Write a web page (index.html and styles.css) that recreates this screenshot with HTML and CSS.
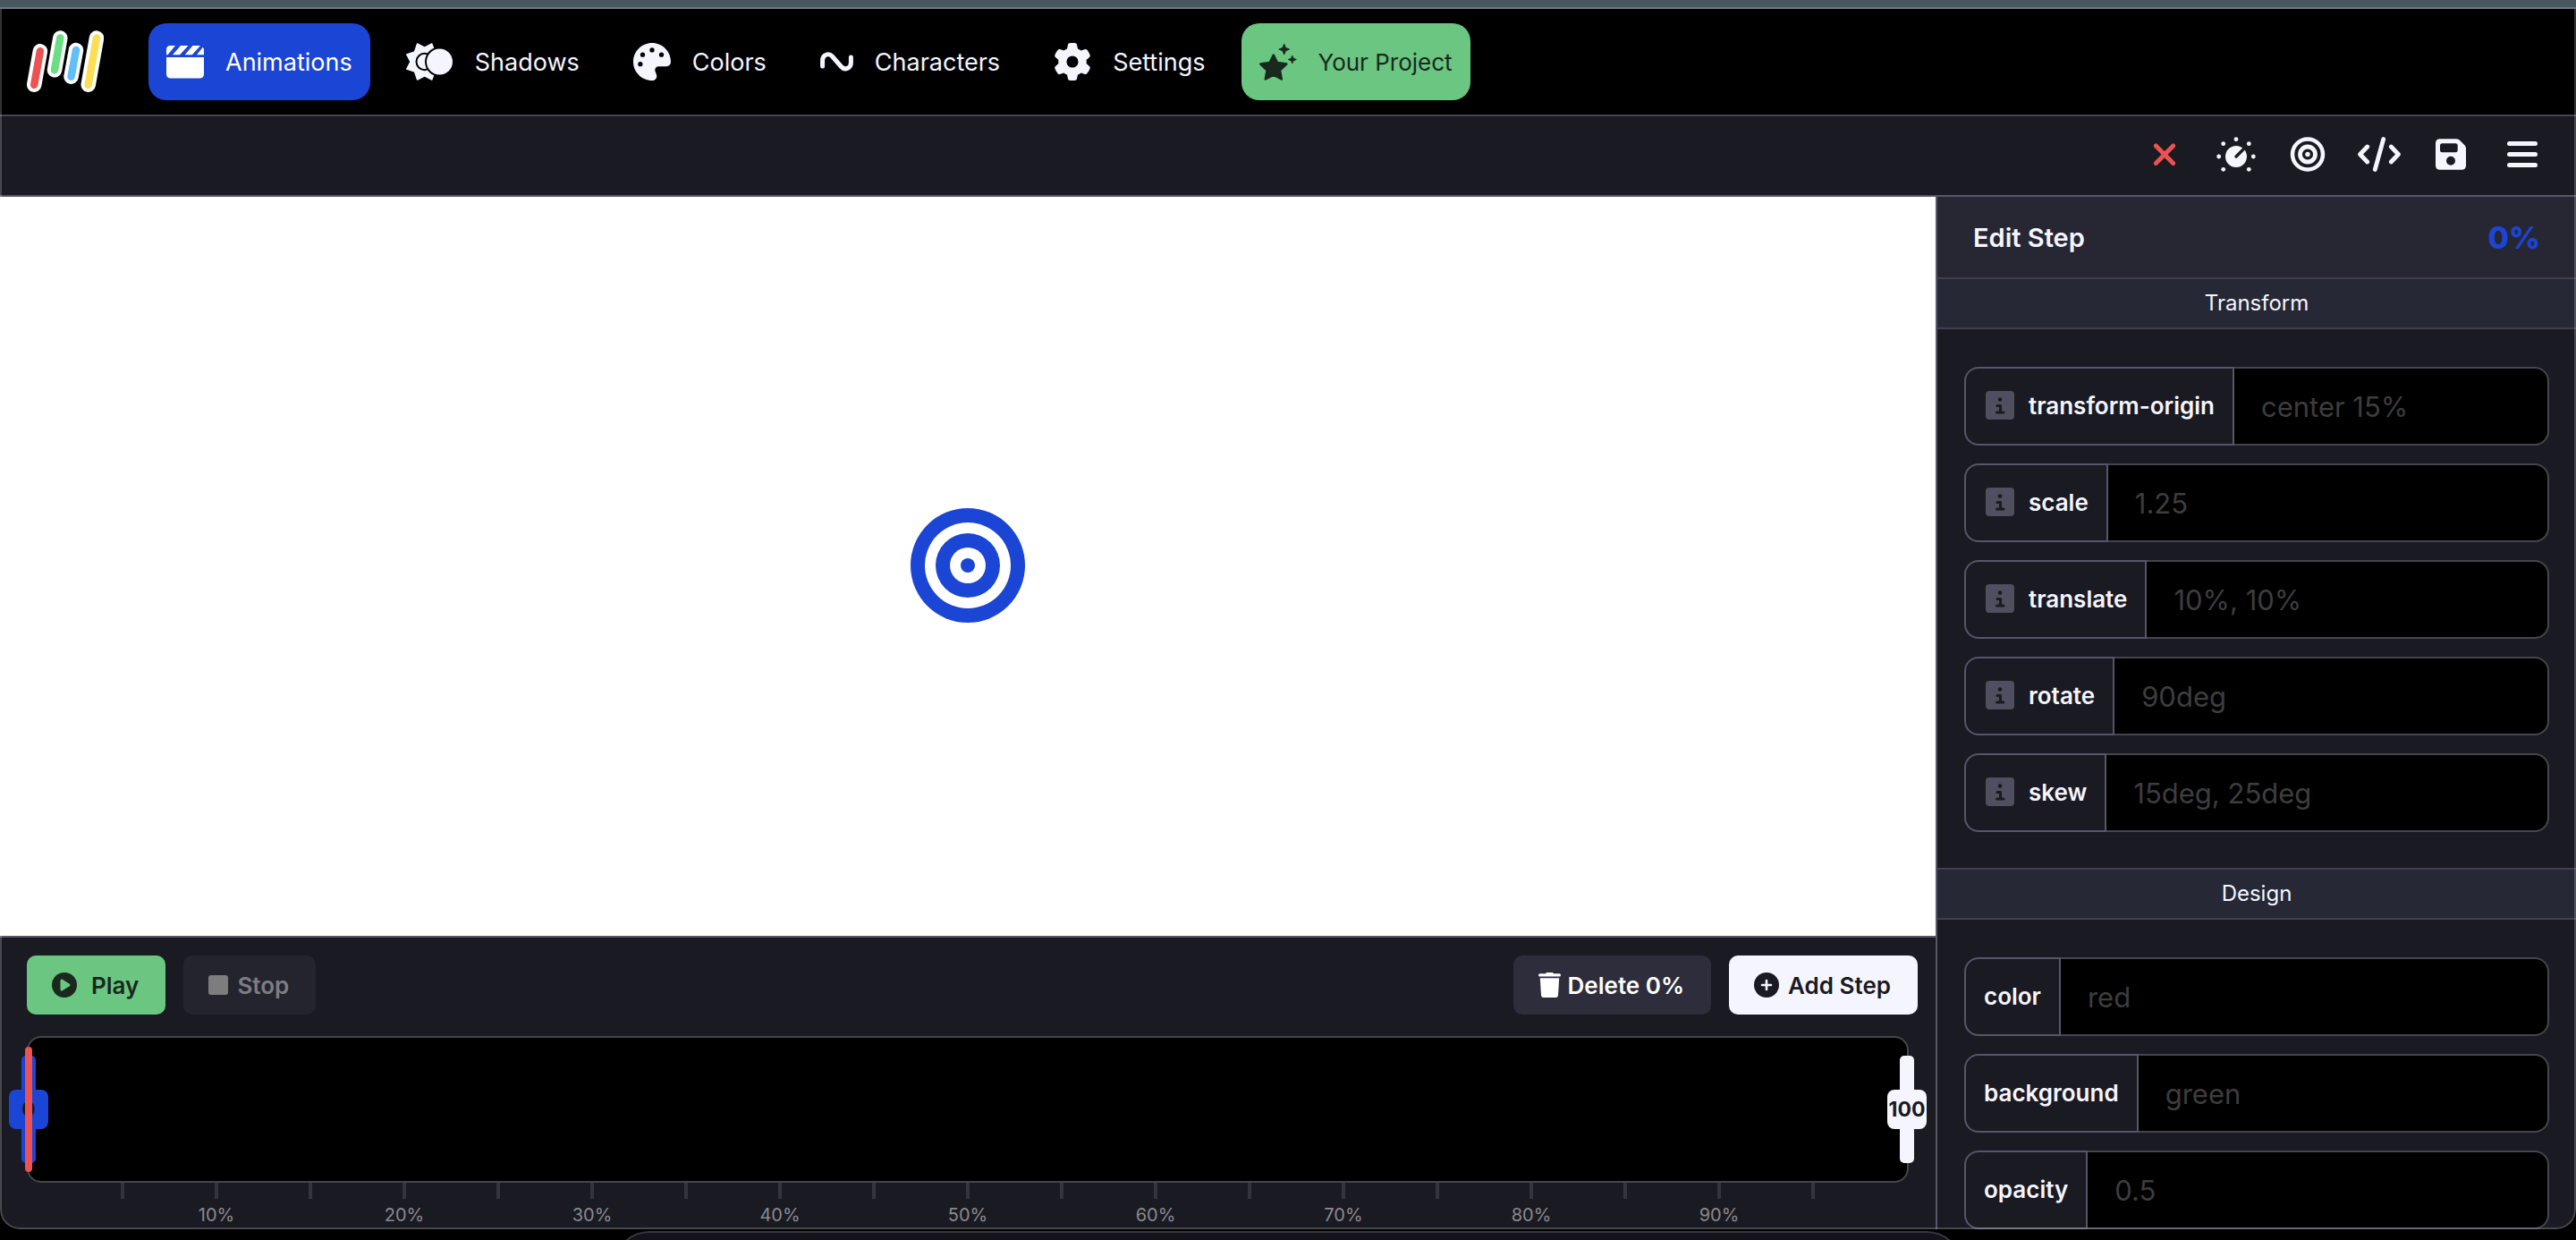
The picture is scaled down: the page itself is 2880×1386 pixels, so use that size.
FILE: index.html
```html
<!DOCTYPE html>
<html lang="en">
<head>
<meta charset="utf-8">
<title>Animations</title>
<link rel="stylesheet" href="styles.css">
</head>
<body>
<svg class="defs" aria-hidden="true">
  <symbol id="info" viewBox="0 0 32 32">
    <rect width="32" height="32" rx="4" fill="#4f4f60"/>
    <circle cx="16" cy="9.500" r="2.300" fill="#1a1a22"/>
    <path d="M13 16.500h3.500v7.500M12.500 24h7.500" fill="none" stroke="#1a1a22" stroke-width="3" stroke-linecap="round" stroke-linejoin="round"/>
  </symbol>
</svg>
<div class="backdrop"></div>
<div class="window">
  <header class="nav">
    <a class="logo" href="#" aria-label="Home">
      <svg width="86" height="70" viewBox="0 0 86 70" stroke-linecap="round">
        <g stroke="#fff" stroke-width="16.500"><path d="M14.900 23.300L8.200 60.700M37.300 8.500L31 44.300M55 22L49.500 51.700M78 8.500L68.700 60.700"/></g>
        <g stroke-width="8.500"><path stroke="#ed5252" d="M14.900 23.300L8.200 60.700"/><path stroke="#6ade82" d="M37.300 8.500L31 44.300"/><path stroke="#60bffb" d="M55 22L49.500 51.700"/><path stroke="#fbde55" d="M78 8.500L68.700 60.700"/></g>
      </svg>
    </a>
    <nav class="tabs">
      <a class="tab tab-active" href="#">
        <svg width="42" height="42" viewBox="0 0 42 42" fill="currentColor"><path d="M0 13.300V7.500Q0 3 4.500 3H10L1.500 13.300zM7 13.300L16 3h8.500L15 13.300zM20.700 13.300L29.500 3H37l.8.200L28.800 13.300zM34 13.300l6.800-8.500Q42 6 42 8v5.300zM0 16h42v18.500q0 5-5 5H5q-5 0-5-5z"/></svg>
        <span>Animations</span>
      </a>
      <a class="tab" href="#">
        <svg width="53" height="42" viewBox="0 0 53 42">
          <mask id="ecl"><rect width="53" height="42" fill="#fff"/><circle cx="37.500" cy="21" r="16.500"/><circle cx="20.700" cy="21" r="9.200" fill="none" stroke="#000" stroke-width="2"/></mask>
          <path mask="url(#ecl)" fill="currentColor" stroke="currentColor" stroke-linejoin="round" stroke-width="1.500" d="M5 21L.8 12.900l8.800-3L12.600 1l8.100 4.200L28.800 1 32 10v22l-3.200 9-8.100-4.200L12.600 41l-3-8.900-8.800-3z"/>
          <circle cx="37.500" cy="21" r="14.500" fill="currentColor"/>
        </svg>
        <span>Shadows</span>
      </a>
      <a class="tab" href="#">
        <svg width="42" height="42" viewBox="0 0 512 512" fill="currentColor"><path d="M512 256c0 .9 0 1.800 0 2.700c-.4 36.500-33.600 61.300-70.100 61.300H344c-26.500 0-48 21.500-48 48c0 3.400 .4 6.700 1 9.900c2.100 10.200 6.500 20 10.800 29.900c6.100 13.800 12.100 27.500 12.100 42c0 31.800-21.600 60.700-53.400 62c-3.500 .1-7 .2-10.600 .2C114.600 512 0 397.400 0 256S114.600 0 256 0S512 114.600 512 256zM128 288a32 32 0 1 0 -64 0 32 32 0 1 0 64 0zm0-96a32 32 0 1 0 0-64 32 32 0 1 0 0 64zM288 96a32 32 0 1 0 -64 0 32 32 0 1 0 64 0zm96 96a32 32 0 1 0 0-64 32 32 0 1 0 0 64z"/></svg>
        <span>Colors</span>
      </a>
      <a class="tab" href="#">
        <svg width="37" height="42" viewBox="0 0 37 42" fill="none" stroke="currentColor" stroke-width="5" stroke-linecap="round"><path d="M2.600 26V19.500C2.600 13 9.500 10.800 13.500 15L23.500 26.500C27.500 31 34.400 28.500 34.400 22V16"/></svg>
        <span>Characters</span>
      </a>
      <a class="tab" href="#">
        <svg width="42" height="42" viewBox="0 0 512 512" fill="currentColor"><path d="M495.900 166.600c3.200 8.700 .5 18.400-6.400 24.600l-43.300 39.400c1.100 8.300 1.700 16.800 1.700 25.400s-.6 17.100-1.700 25.400l43.300 39.400c6.900 6.200 9.600 15.900 6.400 24.600c-4.400 11.900-9.700 23.300-15.800 34.300l-4.700 8.100c-6.600 11-14 21.400-22.100 31.200c-5.900 7.200-15.700 9.600-24.500 6.800l-55.700-17.700c-13.400 10.300-28.200 18.900-44 25.400l-12.500 57.100c-2 9.100-9 16.300-18.200 17.800c-13.800 2.300-28 3.500-42.500 3.500s-28.700-1.200-42.500-3.500c-9.200-1.500-16.200-8.700-18.200-17.800l-12.500-57.100c-15.800-6.500-30.600-15.100-44-25.400L83.100 425.900c-8.800 2.800-18.600 .3-24.500-6.800c-8.100-9.800-15.500-20.200-22.100-31.200l-4.700-8.100c-6.100-11-11.400-22.400-15.800-34.300c-3.200-8.700-.5-18.400 6.400-24.600l43.300-39.400C64.600 273.100 64 264.600 64 256s.6-17.100 1.700-25.400L22.400 191.200c-6.900-6.200-9.600-15.900-6.400-24.600c4.400-11.900 9.700-23.300 15.800-34.300l4.700-8.100c6.600-11 14-21.400 22.100-31.200c5.900-7.200 15.700-9.600 24.500-6.800l55.700 17.700c13.400-10.300 28.200-18.900 44-25.400l12.500-57.100c2-9.100 9-16.300 18.200-17.800C227.300 1.200 241.500 0 256 0s28.700 1.200 42.500 3.500c9.200 1.500 16.200 8.700 18.200 17.800l12.500 57.100c15.800 6.500 30.600 15.100 44 25.400l55.700-17.700c8.800-2.800 18.600-.3 24.500 6.800c8.100 9.800 15.500 20.200 22.100 31.200l4.700 8.100c6.100 11 11.400 22.400 15.800 34.300zM256 336a80 80 0 1 0 0-160 80 80 0 1 0 0 160z"/></svg>
        <span>Settings</span>
      </a>
      <a class="tab tab-project" href="#">
        <svg width="42" height="42" viewBox="0 0 42 42" fill="currentColor" stroke="currentColor" stroke-linejoin="round"><path stroke-width="2.500" d="M15.800 13.500l4.200 8.600 10.300 1.500-7.300 6.900 1.800 10-9-4.800-9 4.800 1.800-10-7.300-6.900 10.300-1.500z"/><path stroke-width="1" d="M27.700 1.200l1.700 4.200 4.100 1.700-4.100 1.700-1.700 4.200-1.700-4.200-4.100-1.700 4.100-1.700zM36.800 14.200l1.300 3 3.200 1.300-3.200 1.300-1.300 3-1.300-3-3.200-1.300 3.200-1.300z"/></svg>
        <span>Your Project</span>
      </a>
    </nav>
  </header>

  <div class="toolbar">
    <button class="tool tool-close" aria-label="Close"><svg width="48" height="40" viewBox="0 0 48 40"><path d="M14.300 10L33.700 29.400M33.700 10L14.300 29.400" stroke="currentColor" stroke-width="5" stroke-linecap="round"/></svg></button>
    <button class="tool" aria-label="Speed"><svg width="48" height="40" viewBox="0 0 48 40" fill="currentColor"><circle cx="24" cy="22" r="12"/><path d="M24 22L35 11" stroke="#1a1a22" stroke-width="3.400" stroke-linecap="round"/><circle cx="24" cy="2.700" r="2.400"/><circle cx="9.700" cy="7.700" r="2.400"/><circle cx="38.300" cy="7.700" r="2.400"/><circle cx="4.700" cy="22" r="2.400"/><circle cx="43.300" cy="22" r="2.400"/><circle cx="9.700" cy="36.300" r="2.400"/><circle cx="38.300" cy="36.300" r="2.400"/></svg></button>
    <button class="tool" aria-label="Target"><svg width="48" height="40" viewBox="0 0 48 40" fill="none" stroke="currentColor"><circle cx="24" cy="19.500" r="17" stroke-width="4.500"/><circle cx="24" cy="19.500" r="8.500" stroke-width="4.800"/><circle cx="24" cy="19.500" r="2.700" fill="currentColor" stroke="none"/></svg></button>
    <button class="tool" aria-label="Code"><svg width="48" height="40" viewBox="0 0 48 40" fill="none" stroke="currentColor" stroke-width="4.800" stroke-linecap="round" stroke-linejoin="round"><path d="M10.700 11L2.600 19.500 10.700 28M37.300 11L45.400 19.500 37.300 28M28.700 2.500L19.300 36.500"/></svg></button>
    <button class="tool" aria-label="Save"><svg width="48" height="40" viewBox="0 0 48 40"><path fill="currentColor" fill-rule="evenodd" d="M12 2.300H30.500q2 0 3.500 1.500L39.500 9.300q1.500 1.500 1.500 3.500V31.700q0 5-5 5H12q-5 0-5-5V7.300q0-5 5-5zM14.500 7.300q-2.500 0-2.500 2.500v5q0 2.500 2.500 2.500h14.700q2.500 0 2.500-2.500v-5q0-2.500-2.500-2.500zM24 21.700a5 5 0 1 0 0 10 5 5 0 1 0 0-10z"/></svg></button>
    <button class="tool" aria-label="Menu"><svg width="48" height="40" viewBox="0 0 48 40"><path d="M9.500 7.500h29M9.500 19.500h29M9.500 31.500h29" stroke="currentColor" stroke-width="5" stroke-linecap="round"/></svg></button>
  </div>

  <div class="workspace">
    <main class="stage">
      <div class="canvas">
        <svg width="128" height="128" viewBox="0 0 128 128"><g fill="#1b45d4"><circle cx="64" cy="64" r="64"/><circle cx="64" cy="64" r="48" fill="#fff"/><circle cx="64" cy="64" r="36"/><circle cx="64" cy="64" r="20" fill="#fff"/><circle cx="64" cy="64" r="8"/></g></svg>
      </div>
      <section class="timeline">
        <div class="controls">
          <button class="btn btn-play"><svg width="28" height="28" viewBox="0 0 28 28"><circle cx="14" cy="14" r="14" fill="currentColor"/><path d="M11 9v10l8-5z" fill="#6ac681" stroke="#6ac681" stroke-width="3" stroke-linejoin="round"/></svg>Play</button>
          <button class="btn btn-stop" disabled><svg width="22" height="22" viewBox="0 0 22 22"><rect width="22" height="22" rx="3" fill="currentColor"/></svg>Stop</button>
          <span class="spacer"></span>
          <button class="btn btn-delete"><svg width="25" height="28" viewBox="0 0 25 28" fill="currentColor"><path d="M8 1.200L9 0h7l1 1.200h6.500q1.500 0 1.500 1.700T23.500 4.600h-22Q0 4.600 0 2.900T1.500 1.200zM1.800 6.300h21.400L22 25.500Q21.800 28 19.300 28H5.700Q3.200 28 3 25.500z"/></svg>Delete 0%</button>
          <button class="btn btn-add"><svg width="28" height="28" viewBox="0 0 28 28"><circle cx="14" cy="14" r="14" fill="currentColor"/><path d="M14 9v10M9 14h10" stroke="#f5f5ff" stroke-width="2.600" stroke-linecap="round"/></svg>Add Step</button>
        </div>
        <div class="track">
          <button class="handle handle-current"><span>0</span></button>
          <button class="handle handle-end"><span>100</span></button>
          <div class="playhead"></div>
        </div>
        <div class="ruler">
          <div class="tick"></div><div class="tick">10%</div><div class="tick"></div><div class="tick">20%</div><div class="tick"></div><div class="tick">30%</div><div class="tick"></div><div class="tick">40%</div><div class="tick"></div><div class="tick">50%</div><div class="tick"></div><div class="tick">60%</div><div class="tick"></div><div class="tick">70%</div><div class="tick"></div><div class="tick">80%</div><div class="tick"></div><div class="tick">90%</div><div class="tick"></div>
        </div>
      </section>
    </main>

    <aside class="sidebar">
      <div class="side-head"><h1>Edit Step</h1><strong>0%</strong></div>
      <h2 class="group-title">Transform</h2>
      <div class="fields">
        <div class="field"><label for="origin"><svg width="32" height="32"><use href="#info"/></svg>transform-origin</label><input id="origin" type="text" placeholder="center 15%"></div>
        <div class="field"><label for="scale"><svg width="32" height="32"><use href="#info"/></svg>scale</label><input id="scale" type="text" placeholder="1.25"></div>
        <div class="field"><label for="translate"><svg width="32" height="32"><use href="#info"/></svg>translate</label><input id="translate" type="text" placeholder="10%, 10%"></div>
        <div class="field"><label for="rotate"><svg width="32" height="32"><use href="#info"/></svg>rotate</label><input id="rotate" type="text" placeholder="90deg"></div>
        <div class="field"><label for="skew"><svg width="32" height="32"><use href="#info"/></svg>skew</label><input id="skew" type="text" placeholder="15deg, 25deg"></div>
      </div>
      <h2 class="group-title">Design</h2>
      <div class="fields">
        <div class="field"><label for="color">color</label><input id="color" type="text" placeholder="red"></div>
        <div class="field"><label for="background">background</label><input id="background" type="text" placeholder="green"></div>
        <div class="field"><label for="opacity">opacity</label><input id="opacity" type="text" placeholder="0.5"></div>
      </div>
    </aside>
  </div>
</div>
<div class="shelf"><div class="dock"></div></div>
</body>
</html>
```
FILE: styles.css
```css
* { box-sizing: border-box; }

body {
  margin: 0;
  height: 100vh;
  overflow: hidden;
  display: flex;
  flex-direction: column;
  background: #000;
  color: #f5f5ff;
  font-family: Inter, "Liberation Sans", sans-serif;
}

button, input { font-family: inherit; margin: 0; }
button { border: 0; cursor: pointer; }
svg { display: block; flex: none; }
.defs { position: absolute; width: 0; height: 0; }

.backdrop {
  flex: none;
  height: 10px;
  background: #485760;
  border-bottom: 2px solid #6c7980;
}

.window {
  position: relative;
  flex: 1;
  min-height: 0;
  display: flex;
  flex-direction: column;
  overflow: hidden;
  border-radius: 0 0 22px 22px;
  background: #1a1a22;
}
.window::after {
  content: "";
  position: absolute;
  inset: 0;
  border: 2px solid rgba(255, 255, 255, 0.2);
  border-top: 0;
  border-radius: 0 0 22px 22px;
  pointer-events: none;
}

.nav {
  flex: none;
  display: flex;
  align-items: center;
  gap: 50px;
  padding: 16px 30px;
  background: #000;
  border-bottom: 2px solid #45454f;
}
.tabs { display: flex; gap: 20px; }
.tab {
  display: flex;
  align-items: center;
  gap: 24px;
  height: 86px;
  padding: 0 20px;
  border-radius: 20px;
  color: #f5f5ff;
  font-size: 27px;
  text-decoration: none;
}
.tab-active { background: #1b45d4; color: #fff; }
.tab-project { background: #6ac681; color: #1a281e; font-size: 26px; }

.toolbar {
  flex: none;
  display: flex;
  justify-content: flex-end;
  height: 90px;
  padding: 0 20px 2px 0;
  border-bottom: 2px solid #56566a;
}
.tool {
  display: grid;
  place-items: center;
  width: 80px;
  padding: 0;
  background: none;
  color: #f5f5ff;
}
.tool-close { color: #ed5252; }

.workspace { flex: 1; min-height: 0; display: flex; }
.stage { flex: 1; min-width: 0; display: flex; flex-direction: column; }
.canvas { flex: 1; display: grid; place-items: center; padding-bottom: 2px; background: #fff; }

.timeline {
  border-top: 2px solid #56566a;
  padding: 20px 20px 4px 30px;
}
.controls { display: flex; gap: 20px; margin-bottom: 24px; }
.spacer { flex: 1; }
.btn {
  display: flex;
  align-items: center;
  gap: 10px;
  height: 66px;
  padding: 0 30px 0 28px;
  border-radius: 10px;
  font-size: 26px;
  font-weight: 600;
}
.btn-play { background: #6ac681; color: #1a281e; gap: 16px; }
.btn-stop { background: #24242f; color: #7d7d80; }
.btn-delete { background: #2d2d3b; color: #fff; gap: 8px; }
.btn-add { background: #f5f5ff; color: #1a1a22; }

.track {
  position: relative;
  height: 164px;
  margin-right: 10px;
  border: 2px solid #45454f;
  border-radius: 16px;
  background: #000;
}
.handle {
  position: absolute;
  top: 20px;
  display: flex;
  align-items: center;
  justify-content: center;
  width: 16px;
  height: 120px;
  padding: 0;
  margin-left: -8px;
  border-radius: 5px;
  color: #1a1a22;
  font-size: 23px;
  font-weight: 700;
}
.handle span {
  flex: none;
  width: 44px;
  line-height: 44px;
  border-radius: 8px;
  background: inherit;
  text-align: center;
}
.handle-current { left: 0; background: #1b45d4; }
.handle-end { left: 100%; background: #f5f5ff; }
.playhead {
  position: absolute;
  left: 0;
  top: 10px;
  width: 8px;
  height: 140px;
  margin-left: -4px;
  border-radius: 4px;
  background: #ed5252;
}

.ruler {
  display: flex;
  justify-content: center;
  height: 48px;
  margin: 0 12px 0 2px;
}
.tick {
  flex: 0 0 5%;
  display: flex;
  flex-direction: column;
  align-items: center;
  gap: 6px;
  color: #8a8a8e;
  font-size: 20px;
  line-height: 24px;
}
.tick::before {
  content: "";
  width: 4px;
  height: 18px;
  background: #34343f;
}

.sidebar {
  flex: 0 0 716px;
  overflow: hidden;
  border-left: 2px solid #56566a;
}
.side-head {
  display: flex;
  align-items: center;
  justify-content: space-between;
  height: 90px;
  padding: 0 40px;
  background: #272733;
}
.side-head h1 { margin: 0; font-size: 29px; font-weight: 600; }
.side-head strong { color: #1b45d4; font-size: 34px; font-weight: 800; }
.group-title {
  margin: 0;
  height: 58px;
  border: solid #3f3f50;
  border-width: 2px 0;
  background: #262835;
  font-size: 24px;
  font-weight: 400;
  line-height: 54px;
  text-align: center;
}
.fields {
  display: flex;
  flex-direction: column;
  gap: 20px;
  padding: 42px 30px 40px;
}
.field { display: flex; height: 88px; }
.field label {
  flex: none;
  display: flex;
  align-items: center;
  gap: 16px;
  padding: 0 20px 2px;
  border: 2px solid #56566a;
  border-radius: 16px 0 0 16px;
  font-size: 26px;
  font-weight: 600;
}
.field label svg { margin-left: 2px; }
.field input {
  flex: 1;
  min-width: 0;
  padding: 0 30px;
  border: 2px solid #45454f;
  border-left: 0;
  border-radius: 0 16px 16px 0;
  background: #000;
  color: #f5f5ff;
  font-size: 31px;
  outline: 0;
}
.field input::placeholder { color: #3d3d3d; opacity: 1; }

.shelf {
  flex: none;
  height: 12px;
  padding-top: 2px;
  overflow: hidden;
}
.dock {
  width: 1508px;
  max-width: 90%;
  height: 80px;
  margin: 0 auto;
  border: 2px solid #38363b;
  border-radius: 48px;
  background: #14121a;
}
```
